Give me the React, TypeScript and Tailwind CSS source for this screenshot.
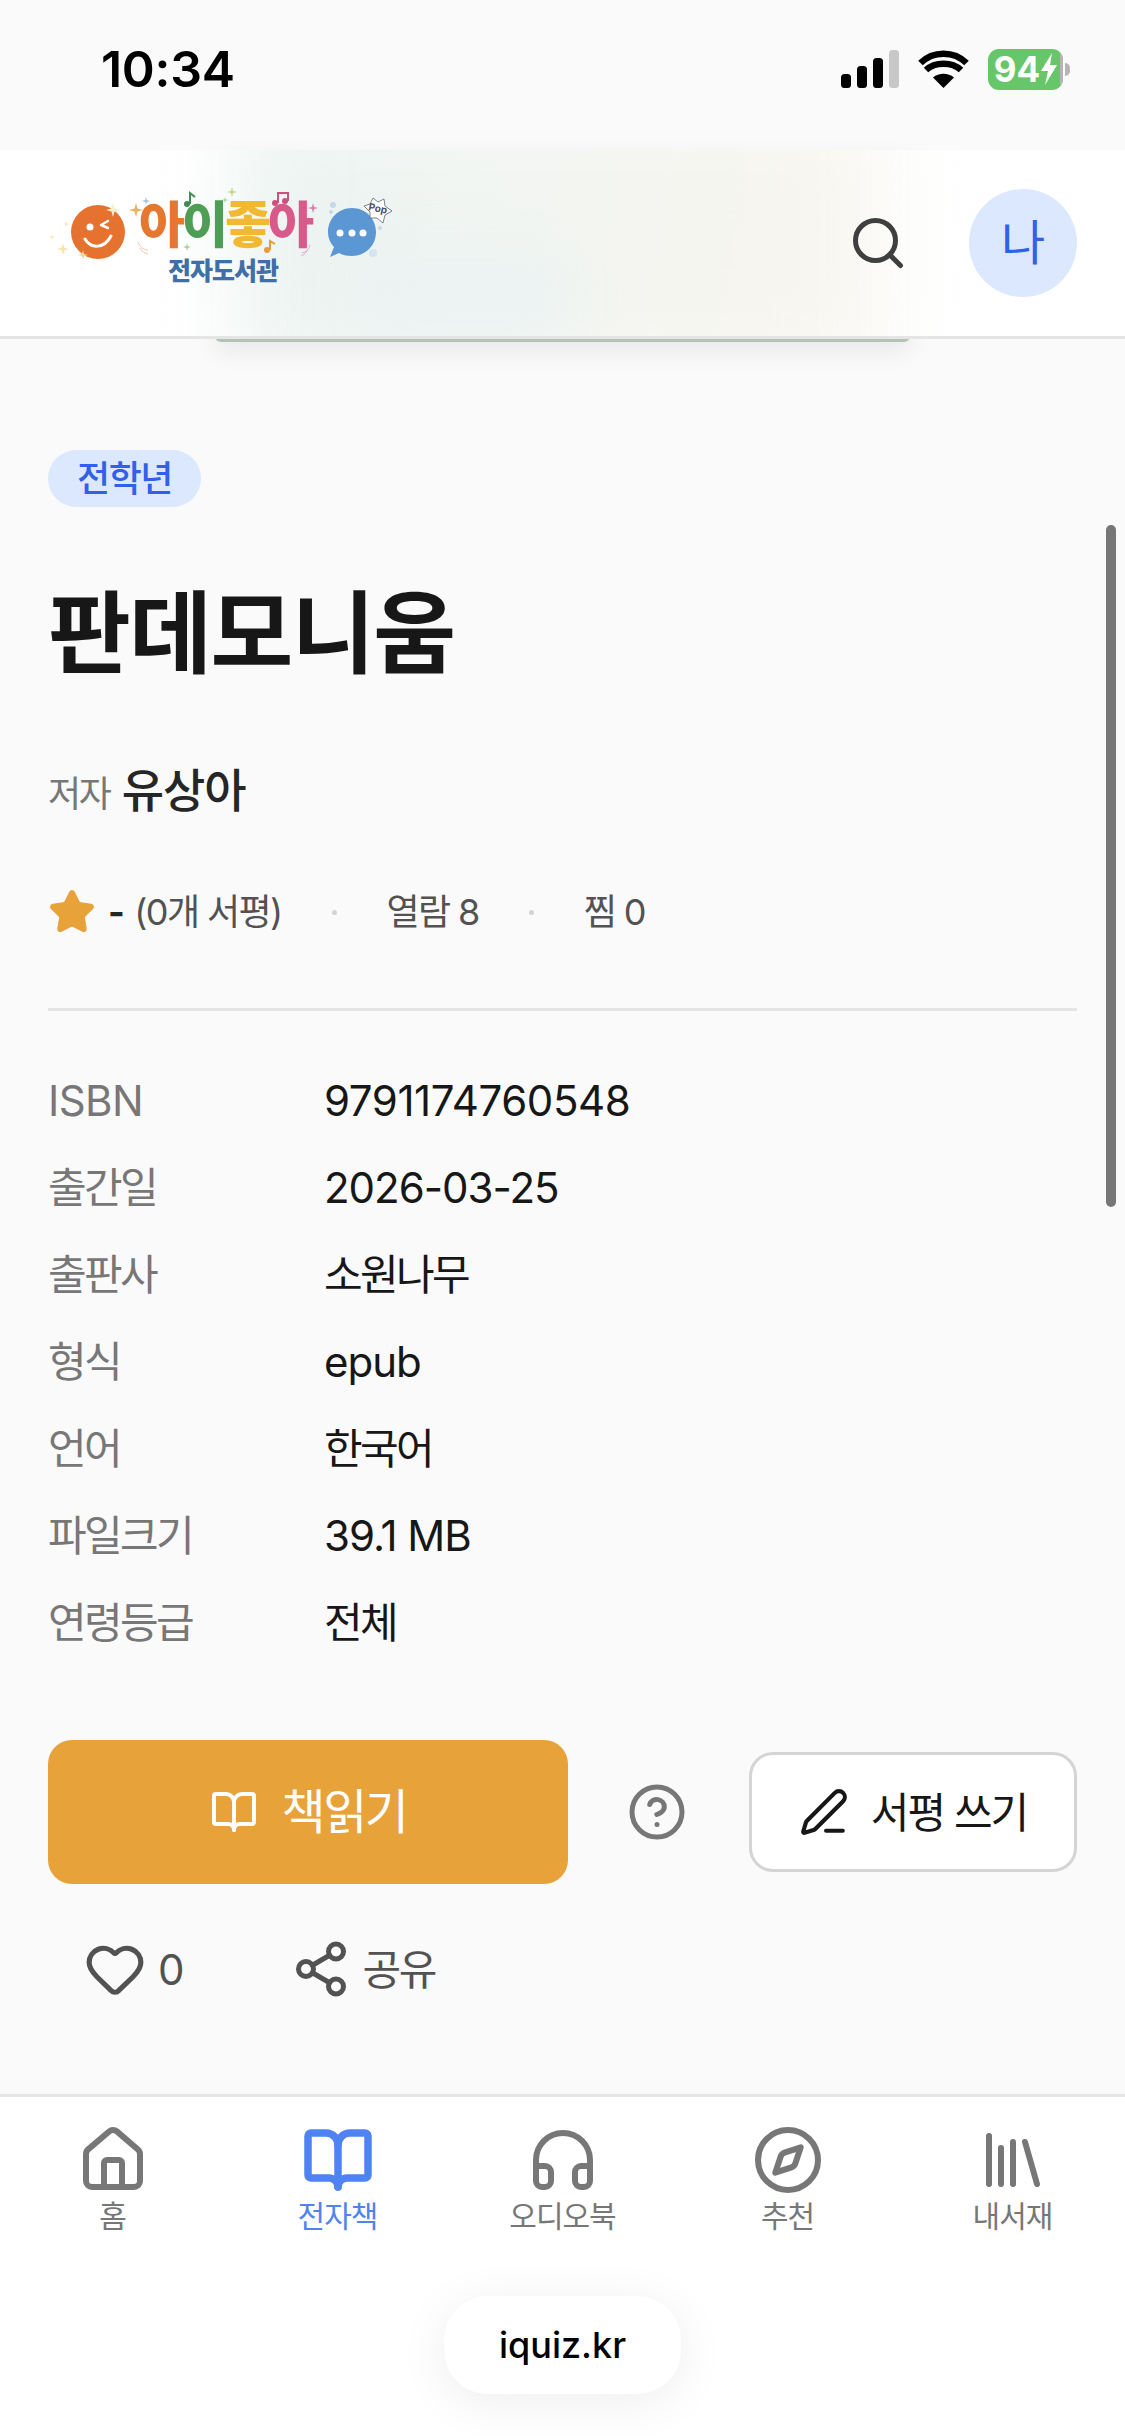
import { BookOpen, CircleHelp, Compass, Headphones, Heart, House, Library, PenLine, Search, Share2, Star } from "lucide-react";

const fontStack = "font-['Inter','Noto_Sans_CJK_KR',sans-serif]";

const details = [
  { label: "ISBN", value: "9791174760548", labelClass: "tracking-[-0.6px]", valueClass: "tracking-[-0.4px]" },
  { label: "출간일", value: "2026-03-25", labelClass: "tracking-[-2.6px]", valueClass: "tracking-[-1px]" },
  { label: "출판사", value: "소원나무", labelClass: "tracking-[-2.6px]", valueClass: "tracking-[-2.6px]" },
  { label: "형식", value: "epub", labelClass: "tracking-[-2.6px]", valueClass: "tracking-[-1px]" },
  { label: "언어", value: "한국어", labelClass: "tracking-[-2.6px]", valueClass: "tracking-[-2.6px]" },
  { label: "파일크기", value: "39.1 MB", labelClass: "tracking-[-2.6px]", valueClass: "tracking-[-1px]" },
  { label: "연령등급", value: "전체", labelClass: "tracking-[-2.6px]", valueClass: "tracking-[-2.6px]" },
];

const navItems = [
  { label: "홈", icon: House },
  { label: "전자책", icon: BookOpen, active: true },
  { label: "오디오북", icon: Headphones },
  { label: "추천", icon: Compass },
  { label: "내서재", icon: Library },
];

function StatusBar() {
  return (
    <div className="flex h-[150px] items-center justify-between bg-[#fafafa] pb-[12px] pl-[101px] pr-[55px]">
      <span className="text-[50px] font-semibold leading-none tracking-[-0.3px] text-black">10:34</span>
      <div className="flex items-center">
        {/* signal */}
        <svg width="58" height="38" viewBox="0 0 58 38">
          <rect x="0" y="24" width="10" height="14" rx="3.5" fill="#000" />
          <rect x="16" y="16" width="10" height="22" rx="3.5" fill="#000" />
          <rect x="32" y="8" width="10" height="30" rx="3.5" fill="#000" />
          <rect x="48" y="0" width="10" height="38" rx="3.5" fill="#c8c8c8" />
        </svg>
        {/* wifi */}
        <svg className="ml-[19px]" width="51" height="38" viewBox="0 0 51 38">
          <path d="M25.5 38 L15 27.5 C21 22.5 30 22.5 36 27.5 Z" fill="#000" />
          <path d="M8 20 C17 11.5 34 11.5 43 20" fill="none" stroke="#000" strokeWidth="6.5" />
          <path d="M2.5 13 C15 0.5 36 0.5 48.5 13" fill="none" stroke="#000" strokeWidth="6.5" />
        </svg>
        {/* battery */}
        <div className="ml-[19px] flex items-center">
          <div className="flex h-[41px] w-[75px] items-center overflow-hidden rounded-[11px] bg-[#68c66a]">
            <div className="flex h-full flex-1 items-center justify-center pl-[3px]">
              <span className="text-[35px] font-bold leading-none text-white">94</span>
              <svg width="16" height="32" viewBox="0 0 16 32" className="ml-[1px]">
                <path d="M11 0 L0 18 H7 L4 32 L16 12 H9 Z" fill="#fff" />
              </svg>
            </div>
            <div className="h-full w-[3px] bg-[#b5b5b5]" />
          </div>
          <div className="ml-[2px] h-[13px] w-[5px] rounded-r-full bg-[#b5b5b5]" />
        </div>
      </div>
    </div>
  );
}

function Sparkle({ x, y, r, fill }: { x: number; y: number; r: number; fill: string }) {
  const k = r * 0.22;
  return (
    <path
      d={`M${x} ${y - r} L${x + k} ${y - k} L${x + r} ${y} L${x + k} ${y + k} L${x} ${y + r} L${x - k} ${y + k} L${x - r} ${y} L${x - k} ${y - k} Z`}
      fill={fill}
    />
  );
}

function Logo() {
  return (
    <svg width="380" height="140" viewBox="0 0 380 140">
      {/* smiley */}
      <circle cx="68" cy="72" r="27" fill="#e5722e" />
      <circle cx="60" cy="67" r="3.5" fill="#fff" />
      <path d="M71 65 L78 61 M71 65 L78 68" stroke="#fff" strokeWidth="2.5" strokeLinecap="round" />
      <path d="M55 79 C61 89 74 89 81 76" fill="none" stroke="#fff" strokeWidth="3" strokeLinecap="round" />
      <Sparkle x={83} y={50} r={7} fill="#f9eecb" />
      <Sparkle x={33} y={89} r={6} fill="#f6e3a6" />
      <Sparkle x={22} y={77} r={3} fill="#f8e9bd" />
      <Sparkle x={36} y={64} r={3} fill="#f8e9bd" />
      <Sparkle x={53} y={95} r={5} fill="#f4d78f" />
      <Sparkle x={106} y={50} r={7} fill="#eeb069" />
      <Sparkle x={116} y={41} r={4} fill="#a5c0e6" />
      <Sparkle x={202} y={32} r={5} fill="#c7d388" />
      <Sparkle x={195} y={40} r={3} fill="#a9cf9f" />
      <Sparkle x={157} y={87} r={4} fill="#a9cf9f" />
      <Sparkle x={283} y={48} r={5} fill="#dc7fa6" />
      <text x="109" y="83" fontSize="50" fontWeight="900" letterSpacing="-3" fontFamily="'Noto Sans CJK KR', sans-serif">
        <tspan fill="#e5772f">아</tspan>
        <tspan fill="#4f9e56">이</tspan>
        <tspan fill="#f1b932">좋</tspan>
        <tspan fill="#d95a8a">아</tspan>
      </text>
      {/* notes */}
      <circle cx="157" cy="44" r="3" fill="#3f8a55" />
      <path d="M160 44 V33 L165 37" fill="none" stroke="#3f8a55" strokeWidth="2" />
      <circle cx="245" cy="43" r="3" fill="#cf4f7c" />
      <circle cx="255" cy="41" r="3" fill="#cf4f7c" />
      <path d="M248 43 V33 H258 V41" fill="none" stroke="#cf4f7c" strokeWidth="2" />
      <circle cx="237" cy="90" r="3" fill="#e89a39" />
      <path d="M240 90 V81 L245 84" fill="none" stroke="#e89a39" strokeWidth="2" />
      {/* swirls */}
      <path d="M108 82 C110 88 115 90 118 90 M110 88 C112 92 115 93 118 94" fill="none" stroke="#ecc7b4" strokeWidth="1" />
      <path d="M280 85 C279 90 275 92 272 93 M277 90 C276 94 273 95 271 96" fill="none" stroke="#e3a8c2" strokeWidth="1" />
      {/* chat bubble */}
      <path d="M322 48 C336 48 346 59 346 72 C346 86 335 96 322 96 C316 96 312 95 309 93 L300 97 L304 87 C300 83 298 78 298 72 C298 59 308 48 322 48 Z" fill="#5b97d2" />
      <circle cx="310" cy="73" r="3.5" fill="#fff" />
      <circle cx="322" cy="73" r="3.5" fill="#fff" />
      <circle cx="333" cy="73" r="3.5" fill="#fff" />
      <circle cx="303" cy="45" r="3" fill="#c4d8ee" />
      <circle cx="301" cy="52" r="2" fill="#c4d8ee" />
      <circle cx="350" cy="68" r="2" fill="#c4d8ee" />
      <circle cx="343" cy="93" r="4" fill="#d5e4f3" />
      {/* pop burst */}
      <path d="M334 46 L340 44 L343 38 L348 42 L354 39 L355 46 L362 51 L355 55 L353 63 L347 58 L340 58 L340 52 Z" fill="#fff" stroke="#5a6474" strokeWidth="0.8" />
      <text x="338" y="50" fontSize="10" fontWeight="700" fill="#4a5364" fontFamily="'Inter', sans-serif" transform="rotate(12 338 50)">Pop</text>
      <text x="138" y="120" fontSize="25" fontWeight="800" letterSpacing="-1" fill="#3f6fa6" fontFamily="'Noto Sans CJK KR', sans-serif">전자도서관</text>
    </svg>
  );
}

function Header() {
  return (
    <div className="relative z-10">
      {/* edge of the blurred cover, shows just under the bar */}
      <div className="absolute left-[215px] top-0 h-[192px] w-[695px] rounded-b-[6px] bg-[#b3c4b4] shadow-[0_10px_24px_rgba(0,0,0,0.07)]" />
      <header className="relative h-[189px] overflow-hidden border-b-[3px] border-[#e5e5e5] bg-white">
        <div className="absolute -inset-y-[40px] left-[240px] w-[640px] bg-[linear-gradient(100deg,#e8f2ef_0%,#f1f5f2_35%,#f5f5ef_70%,#f8f6f0_100%)] blur-[45px]" />
        <div className="absolute bottom-0 left-[350px] h-[80px] w-[220px] bg-[#eaf2f2] blur-[30px]" />
        <div className="relative flex h-full items-center justify-between pr-[48px]">
          <div className="-mt-[26px] pl-[30px]">
            <Logo />
          </div>
          <div className="flex items-center gap-[61px]">
            <Search size={60} strokeWidth={2} className="text-[#3f3f3f]" />
            <div className="flex h-[108px] w-[108px] items-center justify-center rounded-full bg-[#dbe8fe] text-[48px] text-[#2f62e8]">
              나
            </div>
          </div>
        </div>
      </header>
    </div>
  );
}

function BookDetail() {
  return (
    <main className="flex-1 px-[48px] pt-[111px]">
      <span className="inline-flex h-[57px] w-[153px] items-center justify-center rounded-full bg-[#dbe8fe] text-[36px] font-medium tracking-[-1.5px] text-[#2f62e8]">
        전학년
      </span>
      <h1 className="mt-[67px] text-[90px] font-bold leading-[120px] tracking-[-1.5px] text-[#171717]">판데모니움</h1>
      <div className="mt-[62px] flex h-[60px] items-baseline">
        <span className="text-[36px] tracking-[-2.3px] text-[#777777]">저자</span>
        <span className="ml-[12px] text-[46px] font-medium tracking-[-1px] text-[#262626]">유상아</span>
      </div>
      <div className="mt-[66px] flex h-[60px] items-center text-[36px] tracking-[-1.6px] text-[#525252]">
        <Star size={48} fill="#e8a23a" stroke="#e8a23a" strokeWidth={2} />
        <span className="ml-[12px] font-bold text-[#262626]">-</span>
        <span className="ml-[11px]">(0개 서평)</span>
        <span className="ml-[50px] h-[5px] w-[5px] rounded-full bg-[#d4d4d4]" />
        <span className="ml-[50px]">열람 8</span>
        <span className="ml-[50px] h-[5px] w-[5px] rounded-full bg-[#d4d4d4]" />
        <span className="ml-[50px]">찜 0</span>
      </div>
      <div className="mt-[66px] border-t-[3px] border-[#e5e5e5] pt-[46px]">
        {details.map(({ label, value, labelClass, valueClass }) => (
          <div key={label} className="flex h-[87px] items-center text-[42px]">
            <span className={`w-[276px] text-[#777777] ${labelClass}`}>{label}</span>
            <span className={`text-[#171717] ${valueClass}`}>{value}</span>
          </div>
        ))}
      </div>
      <div className="mt-[74px] flex items-center">
        <button className="flex h-[144px] w-[520px] items-center justify-center gap-[24px] rounded-[24px] bg-[#e8a23a] text-[48px] tracking-[-2.5px] text-white">
          <BookOpen size={48} strokeWidth={2} />
          책읽기
        </button>
        <CircleHelp size={60} strokeWidth={2} className="ml-[59px] text-[#777777]" />
        <button className="ml-auto flex h-[120px] w-[328px] items-center justify-center gap-[22px] rounded-[24px] border-[3px] border-[#d4d4d4] bg-white text-[42px] tracking-[-2px] text-[#171717]">
          <PenLine size={50} strokeWidth={2} />
          서평 쓰기
        </button>
      </div>
      <div className="mt-[49px] flex h-[72px] items-center text-[42px] text-[#525252]">
        <Heart size={62} strokeWidth={2} className="ml-[36px]" />
        <span className="ml-[12px]">0</span>
        <Share2 size={60} strokeWidth={2} className="ml-[106px]" />
        <span className="ml-[12px] tracking-[-2.5px]">공유</span>
      </div>
    </main>
  );
}

function BottomNav() {
  return (
    <nav className="relative h-[342px] border-t-[3px] border-[#e5e5e5] bg-white">
      <div className="grid grid-cols-5 pt-[27px]">
        {navItems.map(({ label, icon: Icon, active }) => (
          <div key={label} className={`flex flex-col items-center ${active ? "text-[#4f83f1]" : "text-[#777777]"}`}>
            <Icon size={72} strokeWidth={active ? 2.5 : 2} />
            <span className="text-[30px] leading-[40px] tracking-[-1px]">{label}</span>
          </div>
        ))}
      </div>
      <div className="absolute left-[444px] top-[199px] flex h-[98px] w-[237px] items-center justify-center rounded-[44px] bg-white text-[36px] font-medium text-black shadow-[0_8px_50px_rgba(0,0,0,0.07)]">
        iquiz.kr
      </div>
    </nav>
  );
}

export default function App() {
  return (
    <div className={`relative flex h-[2436px] w-[1125px] flex-col overflow-hidden bg-[#fafafa] ${fontStack}`}>
      <StatusBar />
      <Header />
      <BookDetail />
      <BottomNav />
      {/* scrollbar thumb */}
      <div className="absolute left-[1106px] top-[525px] h-[682px] w-[10px] rounded-full bg-[#777777]" />
    </div>
  );
}
